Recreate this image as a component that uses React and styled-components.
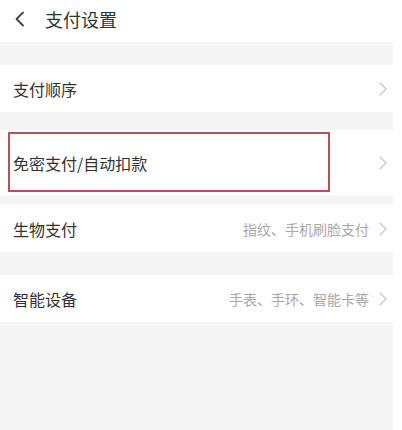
import React from 'react';
import styled, { createGlobalStyle } from 'styled-components';

const GlobalStyle = createGlobalStyle`
  html, body {
    margin: 0;
    padding: 0;
    background: #ffffff;
  }
  body {
    font-family: "Noto Sans CJK SC", "Noto Sans", sans-serif;
  }
`;

const Page = styled.div`
  display: flex;
  width: 402px;
  height: 430px;
  overflow: hidden;
  background: #ffffff;
`;

const Screen = styled.div`
  display: flex;
  flex-direction: column;
  width: 393px;
  background: #f5f5f5;
`;

const Header = styled.div`
  display: flex;
  align-items: center;
  height: 42px;
  padding-left: 14px;
  gap: 19px;
  background: #ffffff;
`;

const Title = styled.div`
  font-size: 18px;
  color: #333333;
  line-height: 1;
  margin-top: -4px;
`;

const Gap = styled.div`
  height: ${(p) => p.h}px;
  flex-shrink: 0;
`;

const Row = styled.div`
  position: relative;
  display: flex;
  align-items: center;
  height: ${(p) => p.h || 47}px;
  padding: 0 5px 0 13px;
  background: #ffffff;
  flex-shrink: 0;
`;

const Label = styled.div`
  flex: 1;
  font-size: 16px;
  color: #333333;
  line-height: 1;
`;

const Hint = styled.div`
  font-size: 14px;
  color: #a8a8a8;
  line-height: 1;
  margin-right: 9px;
`;

const Highlight = styled.div`
  position: absolute;
  left: 8px;
  top: 2px;
  width: 318px;
  height: 56px;
  border: 2px solid #b94f5a;
  pointer-events: none;
`;

const Back = () => (
  <svg width="12" height="16" viewBox="0 0 12 16" style={{ marginTop: -4 }}>
    <polyline points="9,1.5 2.5,8 9,14.5" fill="none" stroke="#444" strokeWidth="1.8" strokeLinecap="round" strokeLinejoin="round" />
  </svg>
);

const Chevron = () => (
  <svg width="10" height="14" viewBox="0 0 10 14">
    <polyline points="2,1 8,7 2,13" fill="none" stroke="#c8c8c8" strokeWidth="1.3" strokeLinecap="round" strokeLinejoin="round" />
  </svg>
);

const App = () => (
  <>
    <GlobalStyle />
    <Page>
      <Screen>
        <Header>
          <Back />
          <Title>支付设置</Title>
        </Header>
        <Gap h={23} />
        <Row>
          <Label>支付顺序</Label>
          <Chevron />
        </Row>
        <Gap h={18} />
        <Row h={65}>
          <Label>免密支付/自动扣款</Label>
          <Chevron />
          <Highlight />
        </Row>
        <Gap h={10} />
        <Row>
          <Label>生物支付</Label>
          <Hint>指纹、手机刷脸支付</Hint>
          <Chevron />
        </Row>
        <Gap h={23} />
        <Row>
          <Label>智能设备</Label>
          <Hint>手表、手环、智能卡等</Hint>
          <Chevron />
        </Row>
      </Screen>
    </Page>
  </>
);

export default App;
